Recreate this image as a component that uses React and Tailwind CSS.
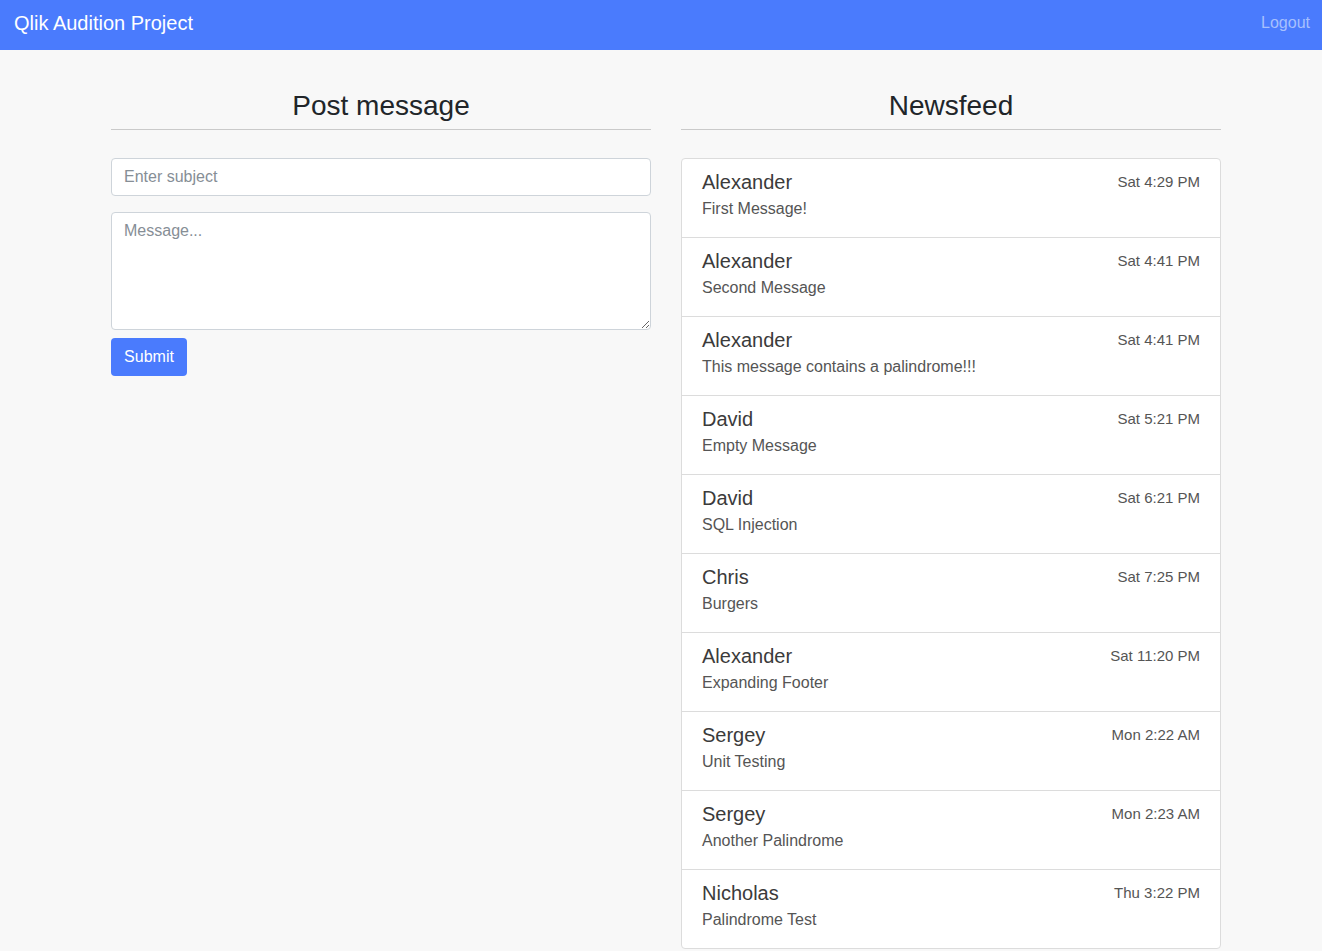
import React from "react";

const items = [
  ["Alexander", "First Message!", "Sat 4:29 PM"],
  ["Alexander", "Second Message", "Sat 4:41 PM"],
  ["Alexander", "This message contains a palindrome!!!", "Sat 4:41 PM"],
  ["David", "Empty Message", "Sat 5:21 PM"],
  ["David", "SQL Injection", "Sat 6:21 PM"],
  ["Chris", "Burgers", "Sat 7:25 PM"],
  ["Alexander", "Expanding Footer", "Sat 11:20 PM"],
  ["Sergey", "Unit Testing", "Mon 2:22 AM"],
  ["Sergey", "Another Palindrome", "Mon 2:23 AM"],
  ["Nicholas", "Palindrome Test", "Thu 3:22 PM"],
];

export default function App() {
  return (
    <div className="min-h-screen bg-[#f8f8f8] font-['Liberation_Sans',Arial,sans-serif]">
      <nav className="h-[50px] bg-[#4a7bfd] flex items-center justify-between pl-[14px] pr-[12px] pb-[4px]">
        <span className="text-white text-[20px] leading-[24px]">Qlik Audition Project</span>
        <span className="text-[#a7c0fe] text-[16px] leading-[24px]">Logout</span>
      </nav>
      <main className="flex gap-[30px] pl-[111px] pt-[39px]">
        <section className="w-[540px] shrink-0">
          <h2 className="text-[28px] leading-[34px] text-[#212529] text-center">Post message</h2>
          <div className="mt-[6px] border-t border-[#cacaca]" />
          <input
            className="mt-[28px] block w-full h-[38px] rounded-[4px] border border-[#ced4da] bg-white px-[12px] text-[16px] text-[#495057] placeholder:text-[#868e96] outline-none"
            placeholder="Enter subject"
          />
          <textarea
            className="mt-[16px] block w-full h-[118px] rounded-[4px] border border-[#ced4da] bg-white px-[12px] py-[6px] text-[16px] leading-[24px] text-[#495057] placeholder:text-[#868e96] outline-none"
            placeholder="Message..."
          />
          <button className="mt-[8px] h-[38px] w-[76px] rounded-[4px] bg-[#4a7bfd] text-white text-[16px]">
            Submit
          </button>
        </section>
        <section className="w-[540px] shrink-0">
          <h2 className="text-[28px] leading-[34px] text-[#212529] text-center">Newsfeed</h2>
          <div className="mt-[6px] border-t border-[#cacaca]" />
          <ul className="mt-[28px] border border-[#dcdcdc] rounded-[4px] bg-white">
            {items.map(([name, msg, time], i) => (
              <li
                key={i}
                className={
                  "px-[20px] pt-[11px] " +
                  (i < items.length - 1 ? "h-[79px] border-b border-[#dcdcdc]" : "h-[78px]")
                }
              >
                <div className="flex items-center justify-between">
                  <span className="text-[20px] leading-[24px] text-[#3b3b3b]">{name}</span>
                  <span className="text-[15px] leading-[20px] text-[#555] -mt-[1px]">{time}</span>
                </div>
                <div className="mt-[3px] text-[16px] leading-[24px] text-[#555]">{msg}</div>
              </li>
            ))}
          </ul>
        </section>
      </main>
    </div>
  );
}
